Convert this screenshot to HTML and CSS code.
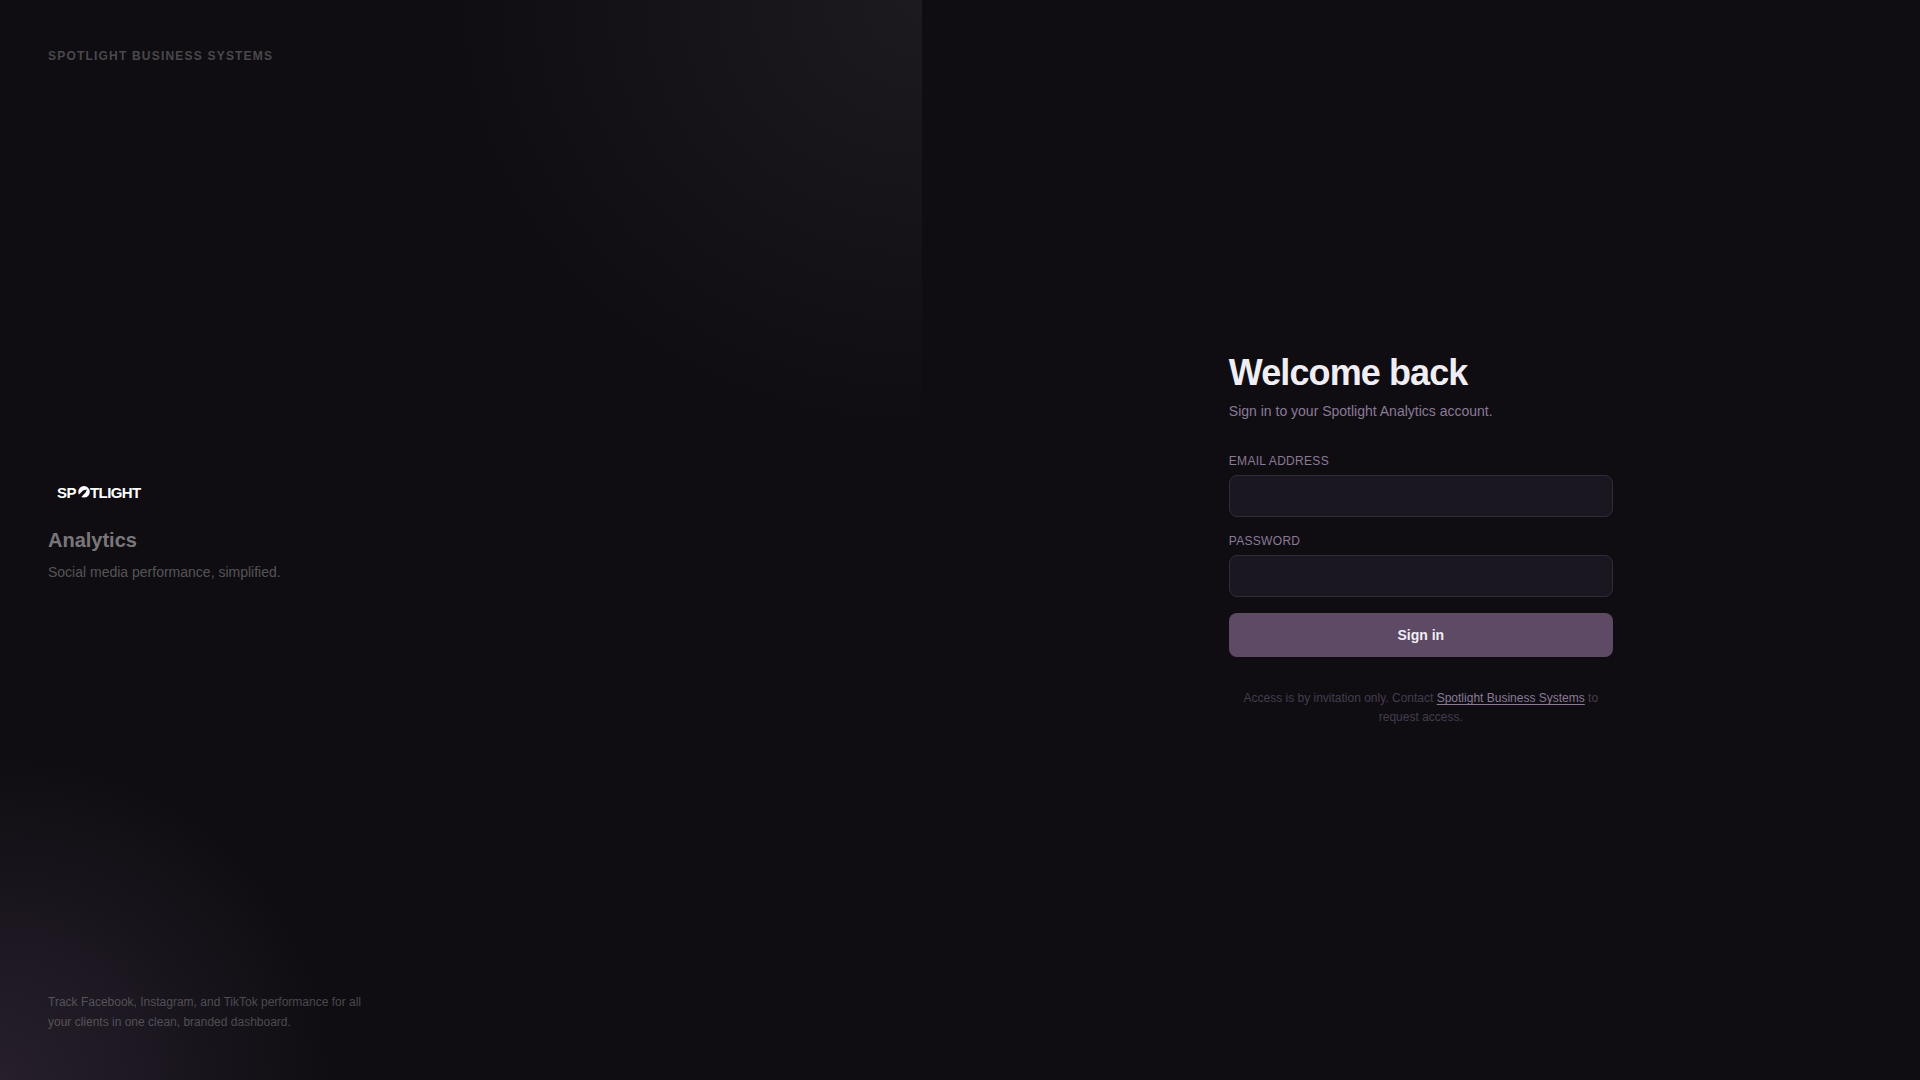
FILE: index.html
```
<!doctype html>
<html lang="en">
<head>
<meta charset="utf-8" />
<meta name="viewport" content="width=device-width, initial-scale=1" />
<title>Sign in</title>
<link rel="stylesheet" href="styles.css">
</head>

<body>
<div class="login">
	<aside class="brand">
		<p class="company">Spotlight Business Systems</p>

		<div class="product">
			<svg class="logo" viewBox="0 0 102 32" role="img" aria-label="Spotlight">
				<text x="9" y="24">SP</text>
				<circle cx="36" cy="17.8" r="5.8" />
				<path class="beam" d="M29 22.5 L35 16.5 L39 15.5 L37.5 18.5 L32 24.5 Z" />
				<text x="42" y="24">TLIGHT</text>
			</svg>
			<h2>Analytics</h2>
			<p class="tagline">Social media performance, simplified.</p>
		</div>

		<p class="about">Track Facebook, Instagram, and TikTok performance for all your clients in one clean, branded dashboard.</p>
	</aside>

	<main class="panel">
		<form class="form">
			<h1>Welcome back</h1>
			<p class="intro">Sign in to your Spotlight Analytics account.</p>

			<div class="field">
				<label for="email">Email address</label>
				<input type="email" id="email" name="email" />
			</div>
			<div class="field">
				<label for="password">Password</label>
				<input type="password" id="password" name="password" />
			</div>
			<button type="submit">Sign in</button>

			<p class="access">Access is by invitation only. Contact <a href="#">Spotlight Business Systems</a> to request access.</p>
		</form>
	</main>
</div>
</body>
</html>
```
FILE: styles.css
```
* { box-sizing: border-box; }
body { margin: 0; background: #0f0d12; color: #f0edf4; font: 14px/20px "Liberation Sans", Arial, sans-serif; }
h1, h2, p { margin: 0; }

.login { display: flex; min-height: 100vh; }

/* left side */
.brand {
	display: flex; flex-direction: column; justify-content: space-between;
	width: 48%; padding: 48px;
	background:
		radial-gradient(ellipse 60% 50% at 0% 100%, rgba(94,74,104,0.3), transparent 60%),
		radial-gradient(ellipse 74% 58% at 100% 0%, rgba(255,255,255,0.055), transparent 70%);
}
.company { font-size: 12px; line-height: 16px; font-weight: bold; letter-spacing: 0.1em; text-transform: uppercase; color: rgba(255,255,255,0.25); }
.logo { display: block; width: 102px; height: 32px; margin-bottom: 20px; fill: #fff; font-size: 15px; font-weight: bold; letter-spacing: -0.04em; }
.beam { fill: #0f0d12; }
.product h2 { margin-bottom: 8px; font-size: 20px; line-height: 28px; color: rgba(255,255,255,0.45); }
.tagline { color: rgba(255,255,255,0.3); }
.about { max-width: 320px; font-size: 12px; color: rgba(255,255,255,0.25); }

/* right side */
.panel { flex: 1; display: flex; align-items: center; justify-content: center; padding: 48px; }
.form { width: 100%; max-width: 384px; }
.form h1 { margin-bottom: 8px; font-size: 36px; line-height: 40px; letter-spacing: -0.025em; }
.intro { margin-bottom: 32px; color: #8a7a96; }
.field { margin-bottom: 16px; }
.field label { display: block; margin-bottom: 6px; font-size: 12px; line-height: 16px; letter-spacing: 0.025em; text-transform: uppercase; color: #8a7a96; }
.field input { display: block; width: 100%; height: 42px; padding: 0 14px; border: 1px solid #332b3b; border-radius: 8px; background: #1a1720; color: #f0edf4; font: inherit; }
.form button { display: block; width: 100%; height: 44px; border: 0; border-radius: 8px; background: #5e4a64; color: #f0edf4; font: inherit; font-weight: bold; cursor: pointer; }
.access { margin-top: 32px; font-size: 12px; line-height: 19px; text-align: center; color: #453c4f; }
.access a { color: #8a7a96; text-underline-offset: 2px; }
```
